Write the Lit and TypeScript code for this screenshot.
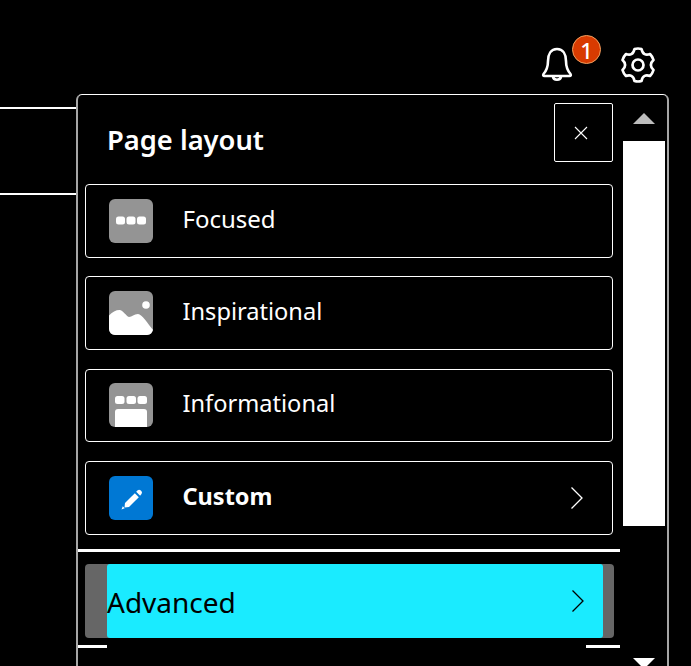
import { LitElement, html, css, svg } from "lit";
import { customElement } from "lit/decorators.js";

const chevron = svg`<svg class="chev" width="14" height="22" viewBox="0 0 14 22"><path d="M1.5 0.500 L12 11 L1.5 21.500" fill="none" stroke="currentColor" stroke-width="1.300"/></svg>`;

const focused = svg`<svg width="44" height="44" viewBox="0 0 44 44"><rect width="44" height="44" rx="6" fill="#949494"/><rect x="7" y="17.500" width="9" height="8" rx="2.500" fill="#fff"/><rect x="17.500" y="17.500" width="9" height="8" rx="2.500" fill="#fff"/><rect x="28" y="17.500" width="9" height="8" rx="2.500" fill="#fff"/></svg>`;

const inspirational = svg`<svg width="44" height="44" viewBox="0 0 44 44"><rect width="44" height="44" rx="6" fill="#949494"/><circle cx="37" cy="14" r="3.800" fill="#fff"/><path d="M0 24.500 C3 21 7 19 10.500 19 C14 19 17 25 20 26 C23 26 25 23 29 23 C33 23 39 33 44 39 V38 A6 6 0 0 1 38 44 H6 A6 6 0 0 1 0 38 Z" fill="#fff"/></svg>`;

const informational = svg`<svg width="44" height="44" viewBox="0 0 44 44"><rect width="44" height="44" rx="6" fill="#949494"/><rect x="6" y="13" width="9.500" height="8" rx="2.500" fill="#fff"/><rect x="17.500" y="13" width="9.500" height="8" rx="2.500" fill="#fff"/><rect x="28.500" y="13" width="9.500" height="8" rx="2.500" fill="#fff"/><path d="M6 29 A3 3 0 0 1 9 26 H35 A3 3 0 0 1 38 29 V44 H6 Z" fill="#fff"/></svg>`;

const custom = svg`<svg width="44" height="44" viewBox="0 0 44 44"><rect width="44" height="44" rx="6" fill="#0078d4"/><path d="M12.500 33.500 L13.800 30.300 L15.700 32.200 Z" fill="#fff"/><path d="M16 27 L25.800 17.200 L29.800 21.200 L20 31 L15.500 31.500 Z" fill="#fff"/><path d="M27.200 15.800 L28.700 14.300 A2.300 2.300 0 0 1 31.500 14.300 L32.500 15.300 A2.300 2.300 0 0 1 32.500 18 L31.100 19.700 Z" fill="#fff"/></svg>`;

@customElement("app-root")
export class AppRoot extends LitElement {
  static styles = css`
    :host {
      display: block;
      height: 666px;
      overflow: hidden;
      background: #000;
      color: #fff;
      font-family: "Noto Sans", "Open Sans", sans-serif;
    }
    .top {
      display: flex;
      justify-content: flex-end;
      align-items: flex-start;
      height: 94px;
      box-sizing: border-box;
      padding: 35px 35px 0 0;
    }
    .bell {
      position: relative;
      width: 32px;
      height: 48px;
      margin-right: 47px;
    }
    .bell svg { display: block; margin-top: 12px; }
    .badge {
      position: absolute;
      left: 31px;
      top: 0;
      width: 29px;
      height: 29px;
      border-radius: 50%;
      background: #d83b01;
      border: 1px solid #f0a060;
      box-sizing: border-box;
      display: flex;
      align-items: center;
      justify-content: center;
      font-size: 22px;
      font-weight: 500;
      line-height: 1;
    }
    .gear { margin-top: 12px; display: block; }
    .main { display: flex; align-items: flex-start; }
    .rules {
      width: 76px;
      height: 88px;
      margin-top: 13px;
      box-sizing: border-box;
      border-top: 2px solid #fff;
      border-bottom: 2px solid #fff;
      flex: none;
    }
    .panel {
      width: 593px;
      height: 600px;
      box-sizing: border-box;
      border-style: solid;
      border-width: 1px 2px 0;
      border-color: #fff #a6a6a6 #a6a6a6;
      border-top-left-radius: 6px;
      border-top-right-radius: 6px;
      padding-right: 2px;
      display: flex;
      flex: none;
    }
    .content { flex: 1; min-width: 0; }
    .head {
      display: flex;
      justify-content: space-between;
      align-items: flex-start;
      height: 89px;
      padding: 8px 10px 0 29px;
      box-sizing: border-box;
    }
    h1 {
      margin: 0;
      padding-top: 18px;
      font-size: 27.300px;
      line-height: 38px;
      font-weight: 600;
    }
    .close {
      width: 59px;
      height: 59px;
      box-sizing: border-box;
      border: 1px solid #fff;
      border-radius: 2px;
      padding-right: 6px;
      display: flex;
      align-items: center;
      justify-content: center;
    }
    .cards {
      display: flex;
      flex-direction: column;
      gap: 18.670px;
      padding: 0 10px 0 7px;
    }
    .card {
      height: 73.670px;
      box-sizing: border-box;
      border: 1px solid #fff;
      border-radius: 4px;
      display: flex;
      align-items: center;
      padding: 0 28px 0 23px;
      font-size: 23.600px;
    }
    .card svg:first-child { flex: none; display: block; }
    .label { margin-left: 29.500px; flex: 1; padding-bottom: 5px; }
    .focus { font-size: 24px; }
    .strong { font-weight: 700; font-size: 23.500px; padding-bottom: 4px; }
    .sep { height: 3px; background: #fff; margin: 14px 3px 0 0; }
    .adv {
      margin: 12.330px 9px 0 7px;
      height: 74px;
      background: #666;
      border-radius: 4px;
      padding: 0 11px 0 22px;
    }
    .adv-in {
      height: 100%;
      background: #1aebff;
      color: #000;
      border-radius: 3px;
      display: flex;
      align-items: center;
      padding: 0 18px 0 0;
      font-size: 28px;
    }
    .adv-in span { flex: 1; padding-top: 2px; }
    .foot { display: flex; justify-content: space-between; margin: 7px 3px 0 0; }
    .foot i { display: block; height: 3px; background: #fff; }
    .foot i:first-child { width: 29px; }
    .foot i:last-child { width: 34px; }
    .bar {
      width: 42px;
      flex: none;
      display: flex;
      flex-direction: column;
      align-items: center;
      padding-top: 18px;
      box-sizing: border-box;
    }
    .up {
      width: 0; height: 0;
      border-left: 11px solid transparent;
      border-right: 11px solid transparent;
      border-bottom: 11px solid #bdbdbd;
    }
    .thumb { width: 100%; height: 385px; background: #fff; margin-top: 17px; flex: none; }
    .down {
      width: 0; height: 0;
      border-left: 11px solid transparent;
      border-right: 11px solid transparent;
      border-top: 11px solid #fff;
      margin-top: 132px;
    }
  `;

  render() {
    return html`
      <div class="top">
        <div class="bell">
          <svg width="32" height="36" viewBox="0 0 32 36" fill="none" stroke="#fff" stroke-width="2.600" stroke-linejoin="round">
            <path d="M2.500 27 C6 23 7 19 7 14 C7 7 10 2 16 2 C22 2 25 7 25 14 C25 19 26 23 29.500 27 Q30.500 29 28.500 29 H3.500 Q1.500 29 2.500 27 Z"/>
            <path d="M12 29.500 C12.500 33.800 19.500 33.800 20 29.500"/>
          </svg>
          <div class="badge">1</div>
        </div>
        <svg class="gear" width="36" height="36" viewBox="0 0 36 36" fill="none" stroke="#fff" stroke-width="2.700" stroke-linejoin="round">
          <circle cx="18" cy="18" r="5.500"/>
          <path d="M14.500 2 Q18 1 21.500 2 C22.500 7.500 26 8.500 30 7 Q32.500 9.500 33.500 13 C30 16 30 20 33.500 23 Q32.500 26.500 30 29 C26 27.500 22.500 28.500 21.500 34 Q18 35 14.500 34 C13.500 28.500 10 27.500 6 29 Q3.500 26.500 2.500 23 C6 20 6 16 2.500 13 Q3.500 9.500 6 7 C10 8.500 13.500 7.500 14.500 2 Z"/>
        </svg>
      </div>
      <div class="main">
        <div class="rules"></div>
        <div class="panel">
          <div class="content">
            <div class="head">
              <h1>Page layout</h1>
              <div class="close">
                <svg width="14" height="14" viewBox="0 0 14 14"><path d="M1 1 L13 13 M13 1 L1 13" stroke="#fff" stroke-width="1.100" fill="none"/></svg>
              </div>
            </div>
            <div class="cards">
              <div class="card">${focused}<span class="label focus">Focused</span></div>
              <div class="card">${inspirational}<span class="label">Inspirational</span></div>
              <div class="card">${informational}<span class="label">Informational</span></div>
              <div class="card">${custom}<span class="label strong">Custom</span>${chevron}</div>
            </div>
            <div class="sep"></div>
            <div class="adv"><div class="adv-in"><span>Advanced</span>${chevron}</div></div>
            <div class="foot"><i></i><i></i></div>
          </div>
          <div class="bar">
            <div class="up"></div>
            <div class="thumb"></div>
            <div class="down"></div>
          </div>
        </div>
      </div>
    `;
  }
}
